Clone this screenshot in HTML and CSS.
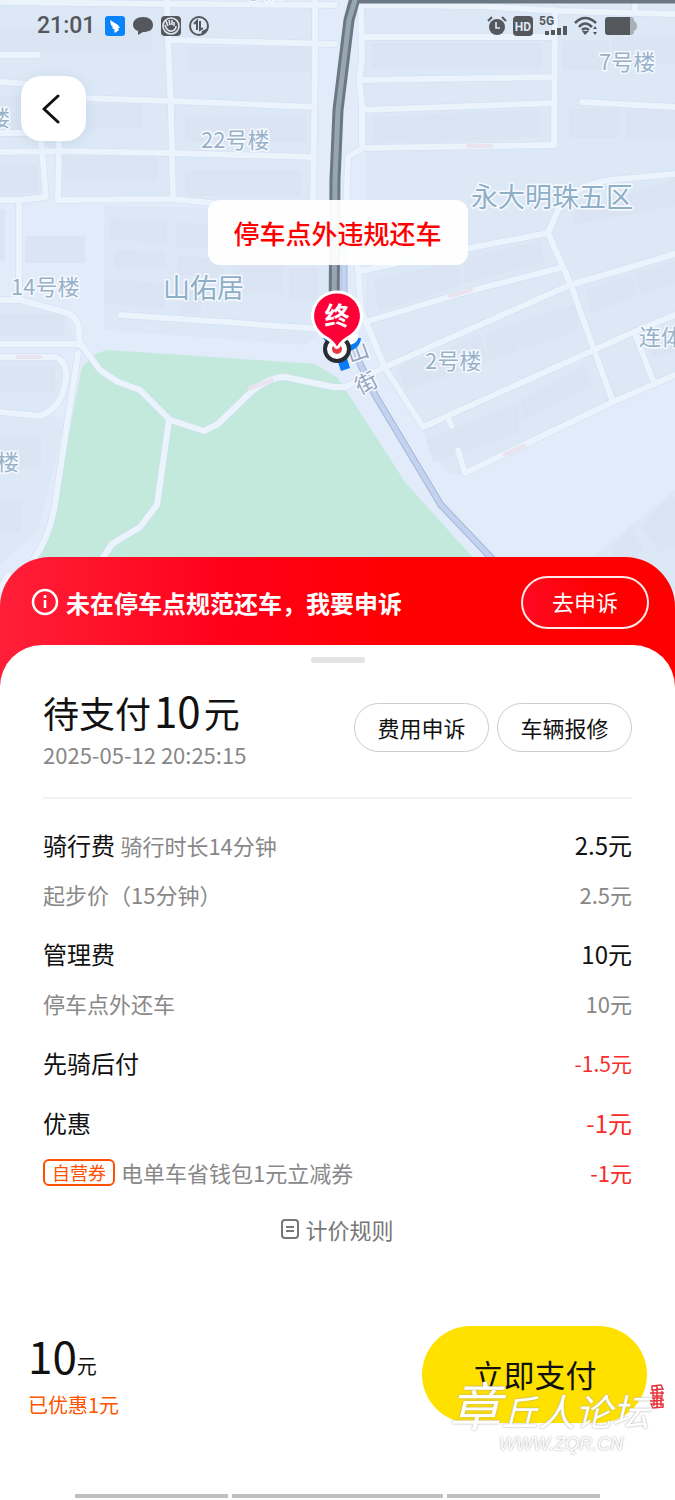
FILE: index.html
```html
<!DOCTYPE html>
<html lang="zh-CN">
	<head>
		<meta charset="UTF-8" />
		<meta name="viewport" content="width=device-width, initial-scale=1.0" />
		<title>待支付</title>
		<link rel="stylesheet" href="styles.css">
	</head>
	<body>
		<header class="map">
			<svg class="map-canvas" viewBox="0 0 675 640">
				<rect width="675" height="640" fill="#e1ebfa" />
				<!-- blocks -->
				<g fill="#dce8f5">
					<path d="M0 5H313V200L60 202L57 151L40 141L45 196L0 198Z" />
					<path d="M104 205L330 212V325L305 345L104 330Z" />
					<path d="M0 300L66 316L76 344H0Z" />
					<path d="M0 357H56L64 372L55 405L40 414L66 420L38 530L0 565Z" />
					<path d="M362 5H675V376L465 472Q450 480 442 466L366 325V150Z" />
					<path d="M588 560L675 490V590H620Z" />
				</g>
				<path class="park" d="M108 350L315 364L338 378L405 482L475 560V640H0V600L38 558L53 515L82 367L97 353Z" />
				<!-- buildings -->
				<g class="buildings">
					<path d="M0 28H104V50H0ZM106 30H151V51H106ZM189 48H309V71H189ZM186 116H305V141H186ZM88 105H141V128H88ZM64 156H157V180H64ZM186 171H300V195H186ZM0 164H37V192H0ZM0 97H22V130H0Z" />
					<path d="M26 237H84V262H26ZM0 210H4V260H0ZM111 219L166 223V242L110 238ZM116 251L164 252V266L115 268ZM178 223L210 225V246H177ZM178 256L222 261V276L178 274ZM106 280L163 284V307L105 302ZM234 267H282V292H234ZM290 268H317V300H290ZM181 292H200V313H181ZM0 315H63V334H0ZM0 367H54V392H0ZM0 438H40V467H0ZM0 502H20V531H0Z" />
					<path d="M373 44H519V68H373ZM521 44H541V68H521ZM374 118L519 111V138L374 142ZM521 110H539V136H521ZM563 42H608V69H563ZM613 38H675V64H613ZM570 110H619V137H570ZM627 110H675V138H627ZM575 212L675 180V205L575 223Z" />
					<path d="M375 281L456 262L462 284L380 310ZM464 260L540 242L543 262L466 282ZM398 368L480 336L486 362L406 389ZM486 335L517 323V350L488 360ZM520 322L574 305L578 329L520 349ZM587 290L632 276L636 296L592 311ZM636 274L675 262V283L640 294ZM427 440L518 404V432L434 461ZM522 401L584 366L591 384L522 419ZM648 345L675 333V350L653 357ZM641 527L671 496L675 500V546L660 551ZM612 549L630 528L642 550L630 560H615Z" />
				</g>
				<!-- small roads: darker casing under a light fill -->
				<defs>
					<g id="roads">
						<path d="M0 2L165 4L335 5M167 0L168 40L171 110L173 199M168 40L335 44M315 0V60L313 204M0 55H38M0 82L30 84M80 98L171 101L313 107M0 152L57 151L171 153L313 157M41 138L46 197L20 200H0M19 200V300M0 133H30M59 138L58 200L173 199L220 204" />
						<path d="M121 315L225 322L320 329M0 300H20L68 313Q79 319 79 332L80 345M0 344H80M0 357H56Q68 363 66 380Q62 408 40 416L0 412M78 353L54 510Q48 540 33 560M169 420L157 505L140 527L112 544L100 562" />
						<path d="M80 343L100 370L118 382L140 390L170 420L204 431L218 424L250 393Q268 377 285 377L333 387H345L385 367L570 285L675 254" />
						<path d="M361 5L362 60L359 80L362 105V145L363 148L348 157L346 220L358 268L361 310L385 368L423 427L594 350L636 331L675 315M361 5L480 6L560 11L675 14M635 3V13M362 37H555M555 10L554 145L363 148M359 80L555 77M362 110L555 103M582 102L675 107" />
						<path d="M360 271L470 248L548 233L558 210Q572 186 610 180L675 174M548 233L571 285L594 350L613 402M365 322L462 293L560 268M458 450L465 473L613 402L675 375M448 418L452 426M636 337L653 380M0 590L8 575" />
					</g>
				</defs>
				<use href="#roads" class="casing" />
				<use href="#roads" class="road" />
				<path class="pink-arrow" d="M18 357H40M250 388L272 380M468 146H491M450 296L471 290M505 454L524 446" />
				<path class="street-edge" d="M344 240V330L375 395L441 505L500 567" />
				<path class="street" d="M344 240V330L375 395L441 505L500 567" />
				<!-- ride track -->
				<path class="track-edge" d="M675 -2H355L349 20L338 110L335 180L334 330" />
				<path class="track" d="M355 0L349 20L338 110L335 180L334 330" />

				<g class="place">
					<text x="201" y="148">22号楼</text>
					<text x="11" y="295">14号楼</text>
					<text x="599" y="70">7号楼</text>
					<text x="425" y="369">2号楼</text>
					<text x="639" y="345">连体楼</text>
					<text x="-12" y="126">楼</text>
					<text x="-3" y="470">楼</text>
					<text x="228" y="-2">9号楼</text>
				</g>
				<g class="place big">
					<text x="163" y="298">山佑居</text>
					<text x="471" y="207">永大明珠五区</text>
				</g>
				<g class="place road-name">
					<text transform="translate(350 363) rotate(-20)">山</text>
					<text transform="translate(360 395) rotate(-27)">街</text>
				</g>

				<!-- end of ride marker -->
				<path d="M323 338H361Q360 350 345 352L350 368L341 371L336 356Z" fill="#0a7bf5" />
				<path d="M326 334H358V339Q355 345 347 345Z" fill="#fff" />
				<circle cx="337" cy="349" r="12" fill="#fff" stroke="#292c30" stroke-width="4" />
				<circle cx="337" cy="349" r="5" fill="#e63946" />
				<path d="M337 292A24 24 0 0 1 349 337Q342 341 339 346Q337 349 335 346Q332 341 325 337A24 24 0 0 1 337 292Z" fill="#fd0038" stroke="#fff" stroke-width="3" />
				<text class="pin-text" x="337" y="325">终</text>
			</svg>

			<div class="status">
				<div class="status-side">
					<time>21:01</time>
					<svg width="20" height="20" viewBox="0 0 20 20">
						<rect width="20" height="20" rx="3" fill="#0b83fb" />
						<path d="M5 4L13 9L15 12L13 12L14 14L10 17L9 15L10 14L7 12L8 11L6 9Z" fill="#fff" />
					</svg>
					<svg width="20" height="20" viewBox="0 0 20 20">
						<path d="M10 1C16 1 20 4 20 9S16 16 10 16L5 19V15Q0 13 0 9C0 4 4 1 10 1Z" />
					</svg>
					<svg width="20" height="20" viewBox="0 0 20 20">
						<rect width="20" height="20" rx="4" />
						<circle cx="10" cy="10" r="8" class="light" />
						<path class="light" d="M4 9Q6 16 11 15Q15 14 15 10M7 10L5 5M9 9L8 4M11 9V4M13 10V6" />
					</svg>
					<svg width="20" height="20" viewBox="0 0 20 20">
						<circle cx="10" cy="10" r="9" class="line" />
						<path class="line" d="M5 8L8 5V14M11 5V14L14 12" />
						<path d="M12 19Q18 17 19 12L13 15Z" />
					</svg>
				</div>
				<div class="status-side right">
					<svg width="20" height="20" viewBox="0 0 20 20">
						<circle cx="10" cy="11" r="8" />
						<path class="line" d="M1 5L5 1M15 1L19 5" />
						<path class="light" d="M9 6V12H13" />
					</svg>
					<svg width="20" height="20" viewBox="0 0 20 20">
						<rect width="20" height="20" rx="4" />
						<text x="10" y="15" class="hd">HD</text>
					</svg>
					<svg width="29" height="20" viewBox="0 0 29 20">
						<text x="0" y="9" class="net">5G</text>
						<path class="bars" d="M8 19V15M14 19V14M20 19V12M26 19V10" />
					</svg>
					<svg width="24" height="20" viewBox="0 0 24 20">
						<path class="wave" d="M1 7Q11 -3 22 7M5 11Q11 4 18 11M8 14Q11 11 15 14" />
						<path d="M8 15H15L11 19ZM19 13L21 10L23 13ZM19 16L21 19L23 16Z" />
					</svg>
					<svg width="34" height="20" viewBox="0 0 34 20">
						<path d="M24 1H27Q30 1 30 5Q33 6 33 10T30 15Q30 19 27 19H24Z" fill="#a9b0b8" />
						<path d="M4 1H26V19H4Q1 19 1 16V4Q1 1 4 1Z" />
					</svg>
				</div>
			</div>

			<button class="back" aria-label="返回">
				<svg width="20" height="32" viewBox="0 0 20 32">
					<path d="M16 3L2 16L16 29" />
				</svg>
			</button>
			<div class="bubble">停车点外违规还车</div>
		</header>

		<main class="panel">
			<section class="notice">
				<svg width="28" height="28" viewBox="0 0 28 28">
					<circle cx="14" cy="14" r="12" />
					<path d="M14 12V20M14 7V10" />
				</svg>
				<p>未在停车点规范还车，我要申诉</p>
				<button class="appeal">去申诉</button>
			</section>

			<section class="sheet">
				<span class="handle"></span>
				<div class="summary">
					<div>
						<h1>待支付<b>10</b>元</h1>
						<time>2025-05-12 20:25:15</time>
					</div>
					<div class="actions">
						<button>费用申诉</button>
						<button>车辆报修</button>
					</div>
				</div>

				<ul class="fees">
					<li>
						<div class="row"><span>骑行费 <small>骑行时长14分钟</small></span><span>2.5元</span></div>
						<div class="row sub"><span>起步价（15分钟）</span><span>2.5元</span></div>
					</li>
					<li>
						<div class="row"><span>管理费</span><span>10元</span></div>
						<div class="row sub"><span>停车点外还车</span><span>10元</span></div>
					</li>
					<li>
						<div class="row"><span>先骑后付</span><span class="minus later">-1.5元</span></div>
					</li>
					<li>
						<div class="row"><span>优惠</span><span class="minus">-1元</span></div>
						<div class="row sub">
							<span class="coupon"><em>自营券</em>电单车省钱包1元立减券</span>
							<span class="minus">-1元</span>
						</div>
					</li>
				</ul>

				<a class="rules" href="#">
					<svg width="18" height="20" viewBox="0 0 18 20">
						<rect x="1" y="1" width="16" height="18" rx="3" />
						<path d="M5 8H13M5 12H13" />
					</svg>
					计价规则
				</a>

				<footer class="pay">
					<div>
						<p class="amount">10<span>元</span></p>
						<p class="saved">已优惠1元</p>
					</div>
					<button class="pay-btn">立即支付</button>
					<div class="watermark">
						<p><b>章</b>丘人论坛</p>
						<svg width="16" height="25" viewBox="0 0 16 25">
							<path d="M3 2L12 1L14 5L3 6ZM1 9H15M4 7V12H13V7M3 14H14M1 17L15 16M2 20H14V23L4 24ZM8 2V24M5 14V22M12 14V22" />
						</svg>
						<span>WWW.ZQR.CN</span>
					</div>
				</footer>

				<div class="navbar"><i></i><i></i><i></i></div>
			</section>
		</main>
	</body>
</html>
```

FILE: styles.css
```css
* {
	margin: 0;
	padding: 0;
	box-sizing: border-box;
}
body {
	min-height: 100vh;
	display: flex;
	flex-direction: column;
	font-family: "Noto Sans CJK SC", sans-serif;
	color: #111;
	background-color: white;
}
button {
	padding-bottom: 2px;
	font-family: inherit;
	color: inherit;
	background: none;
	border: none;
	cursor: pointer;
}

/* map */
.map {
	position: relative;
	overflow: hidden;

	.map-canvas {
		display: block;
		width: 100%;
		height: auto;
	}
	.park {
		fill: #c3e9dc;
	}
	.buildings {
		fill: #dae4f3;
		stroke: #dae4f3;
		stroke-width: 2;
		stroke-linejoin: round;
	}
	.casing,
	.road,
	.street,
	.street-edge,
	.track,
	.track-edge,
	.pink-arrow {
		fill: none;
		stroke-linejoin: round;
		stroke-linecap: round;
	}
	.casing {
		stroke: #d0ddf0;
		stroke-width: 7;
	}
	.road {
		stroke: #ebf3fd;
		stroke-width: 6;
	}
	.pink-arrow {
		stroke: #eae2ee;
		stroke-width: 4;
	}
	.street-edge {
		stroke: #a6b6d8;
		stroke-width: 7;
	}
	.street {
		stroke: #c2d2ef;
		stroke-width: 5;
	}
	.track-edge {
		stroke: #6b7782;
		stroke-width: 11;
	}
	.track {
		stroke: #97a6b3;
		stroke-width: 5;
	}
	.place {
		font-size: 22px;
		fill: #98b1c9;
		stroke: #f6faff;
		stroke-width: 3px;
		stroke-linejoin: round;
		paint-order: stroke;
	}
	.big {
		font-size: 27px;
		fill: #8fafc6;
	}
	.road-name {
		fill: #93a3bd;
	}
	.pin-text {
		font-size: 25px;
		font-weight: 700;
		fill: white;
		text-anchor: middle;
	}
}

.status {
	position: absolute;
	top: 12px;
	left: 0;
	right: 0;
	padding: 0 37px;
	display: flex;
	justify-content: space-between;
	align-items: center;
	color: #54585c;

	.status-side {
		display: flex;
		align-items: center;
		gap: 8px;
	}
	.right {
		gap: 6px;
	}
	time {
		font: 500 23px/28px Roboto, sans-serif;
		margin-right: 2px;
	}
	svg {
		fill: #54585c;
	}
	.line {
		fill: none;
		stroke: #54585c;
		stroke-width: 2;
	}
	.light {
		fill: none;
		stroke: #dfe9f5;
		stroke-width: 1.6;
	}
	.wave {
		fill: none;
		stroke: #54585c;
		stroke-width: 2.6;
	}
	.bars {
		stroke: #54585c;
		stroke-width: 4;
	}
	.hd {
		font: 700 12px Roboto, sans-serif;
		fill: #dfe9f5;
		text-anchor: middle;
	}
	.net {
		font: 700 12px Roboto, sans-serif;
	}
}

.back {
	position: absolute;
	top: 76px;
	left: 21px;
	width: 65px;
	height: 65px;
	display: flex;
	justify-content: center;
	align-items: center;
	padding: 0 3px 0 0;
	border-radius: 20px;
	background-color: white;
	box-shadow: 0 2px 12px rgba(90, 120, 160, 0.15);

	path {
		fill: none;
		stroke: #111;
		stroke-width: 3;
		stroke-linecap: round;
		stroke-linejoin: round;
	}
}
.bubble {
	position: absolute;
	top: 200px;
	left: 50%;
	transform: translateX(-50%);
	padding: 0 26px;
	border-radius: 12px;
	background-color: rgba(255, 255, 255, 0.95);
	color: #fe0000;
	font-size: 26px;
	font-weight: 500;
	line-height: 65px;
	white-space: nowrap;
}

/* bottom panel */
.panel {
	position: relative;
	flex: 1;
	display: flex;
	flex-direction: column;
	margin-top: -83px;
	border-radius: 50px 50px 0 0;
	background: linear-gradient(90deg, #ff1f38, #ff0018 35%, #fe0000 60%);
}
.notice {
	height: 88px;
	padding: 2px 26px 0 31px;
	display: flex;
	align-items: center;
	color: white;

	svg {
		margin-right: 7px;
		fill: none;
		stroke: white;
		stroke-width: 2.5;
	}
	p {
		flex: 1;
		font-size: 24px;
		font-weight: 700;
	}
	.appeal {
		width: 128px;
		height: 53px;
		border: 2px solid #ffe9e9;
		border-radius: 27px;
		background: linear-gradient(90deg, #fe0a22, #fe0000 60%);
		font-size: 22px;
	}
}
.sheet {
	flex: 1;
	display: flex;
	flex-direction: column;
	padding: 12px 43px 2px;
	border-radius: 42px 42px 0 0;
	background-color: white;
}
.handle {
	align-self: center;
	width: 54px;
	height: 6px;
	border-radius: 3px;
	background-color: #e3e3e3;
}
.summary {
	display: flex;
	justify-content: space-between;
	align-items: flex-start;
	padding: 20px 0 28px;
	border-bottom: 2px solid #f3f3f3;

	h1 {
		font-size: 36px;
		font-weight: 400;
		line-height: 54px;
	}
	b {
		font-size: 42px;
		font-weight: 400;
		margin: 0 3px;
	}
	time {
		display: block;
		font-size: 22px;
		line-height: 30px;
		color: #888;
	}
	.actions {
		display: flex;
		gap: 8px;
		padding-top: 20px;
	}
	.actions button {
		width: 135px;
		height: 49px;
		border: 1px solid #ccc;
		border-radius: 25px;
		font-size: 22px;
	}
}

.fees {
	list-style: none;
	display: flex;
	flex-direction: column;
	gap: 26px;
	padding-top: 29px;

	li {
		display: flex;
		flex-direction: column;
		gap: 15px;
	}
	.row {
		display: flex;
		justify-content: space-between;
		font-size: 24px;
		line-height: 34px;
	}
	small,
	.sub {
		font-size: 22px;
		color: #888;
	}
	.minus {
		color: #fa2c2c;
	}
	.later {
		font-size: 21px;
	}
	.coupon {
		display: flex;
		align-items: center;
		gap: 6px;
	}
	em {
		padding: 0 7px;
		border: 2px solid #ff5000;
		border-radius: 6px;
		color: #ff5000;
		font-size: 18px;
		font-style: normal;
		line-height: 23px;
	}
}
.rules {
	align-self: center;
	display: flex;
	align-items: center;
	gap: 6px;
	margin-top: 24px;
	color: #777;
	font-size: 22px;
	line-height: 32px;
	text-decoration: none;

	svg {
		fill: none;
		stroke: #777;
		stroke-width: 2;
	}
}

.pay {
	position: relative;
	display: flex;
	justify-content: space-between;
	align-items: center;
	margin: 81px -15px 0;

	.amount {
		font-size: 44px;
		line-height: 50px;
	}
	.amount span {
		font-size: 20px;
	}
	.saved {
		font-size: 20px;
		line-height: 28px;
		color: #ff5500;
	}
	.pay-btn {
		width: 225px;
		height: 97px;
		border-radius: 49px;
		background-color: #ffe100;
		font-size: 31px;
	}
}
.watermark {
	position: absolute;
	top: 54px;
	right: -18px;
	display: grid;
	grid-template-columns: auto auto;
	color: white;
	text-shadow: 0 0 2px #999;
	pointer-events: none;

	p {
		font-size: 37px;
		font-style: italic;
		line-height: 48px;
	}
	b {
		font-size: 52px;
		font-weight: 400;
	}
	svg {
		margin-top: 4px;
		fill: none;
		stroke: #e8333a;
		stroke-width: 1.5;
	}
	span {
		padding-left: 50px;
		font: italic 18px/20px "Liberation Sans", sans-serif;
	}
}

.navbar {
	margin: auto 32px 0;
	display: flex;
	gap: 4px;

	i {
		flex: 153;
		height: 4px;
		background-color: #bfbfbf;
	}
	i:nth-child(2) {
		flex: 211;
	}
}
```
